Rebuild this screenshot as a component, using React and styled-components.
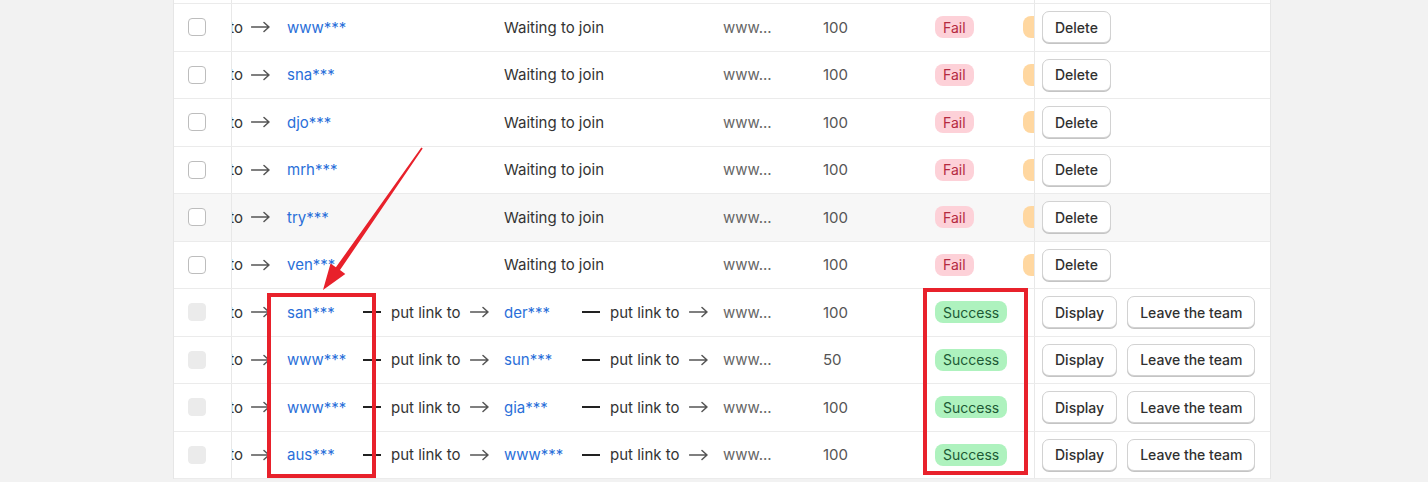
import React from 'react'
import styled, { createGlobalStyle } from 'styled-components'

const GlobalStyle = createGlobalStyle`
    html, body {
        margin: 0;
        padding: 0;
        background: #f2f2f2;
        font-family: Inter, 'Noto Sans', sans-serif;
        color: #333;
    }
`

const Page = styled.div`
    position: relative;
    width: 1428px;
    height: 482px;
    overflow: hidden;
    padding-left: 173px;
    box-sizing: border-box;
`

const Card = styled.div`
    width: 1098px;
    box-sizing: border-box;
    background: #fff;
    border-left: 1px solid #e6e6e6;
    border-right: 1px solid #e6e6e6;
`

const Row = styled.div`
    display: grid;
    grid-template-columns: 58px 1fr 236px;
    height: ${(p) => (p.$stub ? '4px' : '47.5px')};
    box-sizing: border-box;
    border-bottom: 1px solid #ebebeb;
    background: ${(p) => (p.$hover ? '#f7f7f7' : '#fff')};
`

const CheckCell = styled.div`
    display: flex;
    align-items: center;
    padding-left: 14px;
    border-right: 1px solid #e8e8e8;
`

const Checkbox = styled.span`
    width: 18px;
    height: 18px;
    box-sizing: border-box;
    border-radius: 4px;
    border: 1px solid ${(p) => (p.$disabled ? '#ebebeb' : '#bdbdbd')};
    background: ${(p) => (p.$disabled ? '#ebebeb' : '#fff')};
`

const Scroll = styled.div`
    display: flex;
    align-items: center;
    overflow: hidden;
    min-width: 0;
    font-size: 15px;
    white-space: nowrap;
`

const Cell = styled.div`
    flex: 0 0 ${(p) => p.$w}px;
    min-width: 0;
    display: flex;
    align-items: center;
    justify-content: ${(p) => (p.$end ? 'flex-end' : 'flex-start')};
    padding-right: ${(p) => p.$pr || 0}px;
    box-sizing: border-box;
    color: ${(p) => p.$color || '#333'};
`

const Link = styled.span`
    color: #2a6fd9;
`

const Chain = styled.span`
    display: inline-flex;
    flex-shrink: 0;
    align-items: center;
    gap: ${(p) => p.$gap || 9}px;
`

const Dash = styled.span`
    width: 18px;
    height: 2px;
    background: #222;
    margin-right: 1px;
`

const Badge = styled.span`
    display: inline-flex;
    align-items: center;
    height: 22px;
    padding: 0 8px;
    border-radius: 8px;
    font-size: 14px;
    background: ${(p) => (p.$kind === 'fail' ? '#fdd1d8' : '#aef2be')};
    color: ${(p) => (p.$kind === 'fail' ? '#b52a40' : '#1d5a35')};
`

const Pending = styled.span`
    flex-shrink: 0;
    width: 30px;
    height: 22px;
    border-radius: 8px;
    background: #ffd7a0;
`

const Actions = styled.div`
    display: flex;
    align-items: center;
    gap: 10px;
    padding-left: 7px;
    border-left: 1px solid #e8e8e8;
`

const Button = styled.button`
    height: 32px;
    padding: 0 12px;
    border: 1px solid #d2d2d2;
    border-radius: 7px;
    background: #fff;
    box-shadow: 0 1px 0 #c4c4c4;
    font-family: Inter, sans-serif;
    font-size: 14px;
    font-weight: 500;
    color: #303030;
`

const Overlay = styled.svg`
    position: absolute;
    left: 0;
    top: 0;
    pointer-events: none;
`

const Arrow = () => (
    <svg width="19" height="12" viewBox="0 0 19 12" style={{ flexShrink: 0 }}>
        <path d="M0.5 6H18M13 1.5L18 6L13 10.5" fill="none" stroke="#555" strokeWidth="1.5" strokeLinecap="round" strokeLinejoin="round" />
    </svg>
)

const Connector = () => (
    <Chain>
        <Dash />
        <span>put link to</span>
        <Arrow />
    </Chain>
)

const failRows = ['www***', 'sna***', 'djo***', 'mrh***', 'try***', 'ven***']
const successRows = [
    { from: 'san***', to: 'der***', count: 100 },
    { from: 'www***', to: 'sun***', count: 50 },
    { from: 'www***', to: 'gia***', count: 100 },
    { from: 'aus***', to: 'www***', count: 100 },
]

// first column is scrolled out of view, only its tail shows
const Lead = () => (
    <Cell $w={55} $end $pr={17}>
        <Chain $gap={8}>
            <span>put link to</span>
            <Arrow />
        </Chain>
    </Cell>
)

const FailRow = ({ name, hover }) => (
    <Row $hover={hover}>
        <CheckCell>
            <Checkbox />
        </CheckCell>
        <Scroll>
            <Lead />
            <Cell $w={76}>
                <Link>{name}</Link>
            </Cell>
            <Cell $w={141} />
            <Cell $w={78}>Waiting to join</Cell>
            <Cell $w={141} />
            <Cell $w={100} $color="#666">www...</Cell>
            <Cell $w={112} $color="#555">100</Cell>
            <Cell $w={88}>
                <Badge $kind="fail">Fail</Badge>
            </Cell>
            <Cell $w={40}>
                <Pending />
            </Cell>
        </Scroll>
        <Actions>
            <Button>Delete</Button>
        </Actions>
    </Row>
)

const SuccessRow = ({ from, to, count }) => (
    <Row>
        <CheckCell>
            <Checkbox $disabled />
        </CheckCell>
        <Scroll>
            <Lead />
            <Cell $w={76}>
                <Link>{from}</Link>
            </Cell>
            <Cell $w={141}>
                <Connector />
            </Cell>
            <Cell $w={78}>
                <Link>{to}</Link>
            </Cell>
            <Cell $w={141}>
                <Connector />
            </Cell>
            <Cell $w={100} $color="#666">www...</Cell>
            <Cell $w={112} $color="#555">{count}</Cell>
            <Cell $w={88}>
                <Badge $kind="success">Success</Badge>
            </Cell>
        </Scroll>
        <Actions>
            <Button>Display</Button>
            <Button>Leave the team</Button>
        </Actions>
    </Row>
)

const App = () => {
    return (
        <Page>
            <GlobalStyle />
            <Card>
                <Row $stub>
                    <CheckCell />
                    <div />
                    <Actions />
                </Row>
                {failRows.map((name, i) => (
                    <FailRow key={i} name={name} hover={i === 4} />
                ))}
                {successRows.map((r, i) => (
                    <SuccessRow key={i} {...r} />
                ))}
            </Card>
            <Overlay width="1428" height="482">
                <polygon
                    points="422.7,148.5 340,270.1 345.3,273.9 323,290 330.5,263.5 335.9,267.3 421.3,147.5"
                    fill="#e8212b"
                />
                <rect x="269" y="295" width="105" height="181" fill="none" stroke="#e8212b" strokeWidth="4" />
                <rect x="925" y="290" width="101" height="183" fill="none" stroke="#e8212b" strokeWidth="4" />
            </Overlay>
        </Page>
    )
}

export default App
